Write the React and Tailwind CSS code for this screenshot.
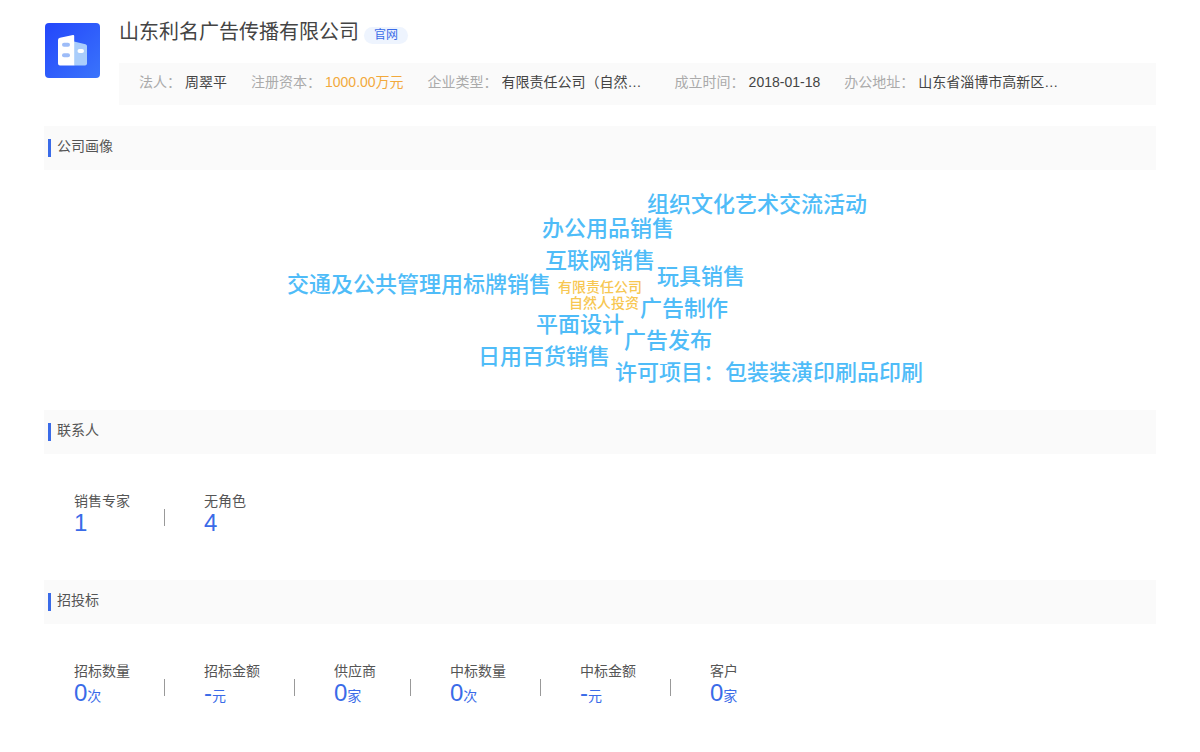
import clsx from 'clsx';

const facts = [
  { label: '法人：', value: '周翠平' },
  { label: '注册资本：', value: '1000.00万元', highlight: true },
  { label: '企业类型：', value: '有限责任公司（自然人）', clip: true },
  { label: '成立时间：', value: '2018-01-18' },
  { label: '办公地址：', value: '山东省淄博市高新区柳泉', clip: true },
];

const words = [
  { text: '组织文化艺术交流活动', place: 'left-[calc(50%+47px)] top-[23px]' },
  { text: '办公用品销售', place: 'left-[calc(50%-58px)] top-[47px]' },
  { text: '互联网销售', place: 'left-[calc(50%-55px)] top-[79px]' },
  { text: '玩具销售', place: 'left-[calc(50%+57px)] top-[95px]' },
  { text: '交通及公共管理用标牌销售', place: 'left-[calc(50%-313px)] top-[103px]' },
  { text: '有限责任公司', place: 'left-[calc(50%-42px)] top-[105px]', small: true },
  { text: '自然人投资', place: 'left-[calc(50%-31px)] top-[121px]', small: true },
  { text: '广告制作', place: 'left-[calc(50%+40px)] top-[127px]' },
  { text: '平面设计', place: 'left-[calc(50%-64px)] top-[143px]' },
  { text: '广告发布', place: 'left-[calc(50%+24px)] top-[159px]' },
  { text: '日用百货销售', place: 'left-[calc(50%-122px)] top-[175px]' },
  { text: '许可项目：包装装潢印刷品印刷', place: 'left-[calc(50%+15px)] top-[191px]' },
];

const contacts = [
  { label: '销售专家', value: '1' },
  { label: '无角色', value: '4' },
];

const bids = [
  { label: '招标数量', value: '0', unit: '次' },
  { label: '招标金额', value: '-', unit: '元' },
  { label: '供应商', value: '0', unit: '家' },
  { label: '中标数量', value: '0', unit: '次' },
  { label: '中标金额', value: '-', unit: '元' },
  { label: '客户', value: '0', unit: '家' },
];

function CompanyLogo() {
  return (
    <svg viewBox="0 0 55 55" className="size-[55px] shrink-0" aria-hidden="true">
      <defs>
        <linearGradient id="logo-bg" x1="0" y1="0" x2="1" y2="1">
          <stop offset="0" stopColor="#2346fb" />
          <stop offset="1" stopColor="#3a74fb" />
        </linearGradient>
      </defs>
      <rect width="55" height="55" rx="4" fill="url(#logo-bg)" />
      <path d="M29 18.5 40.5 21.2Q42 21.6 42 23V40.5Q42 42.5 40 42.5H29Z" fill="#a9cdfb" />
      <path d="M15 14.8 28 12Q29.2 11.8 29.2 13V42.5H15Q13 42.5 13 40.5V17Q13 15.2 15 14.8Z" fill="#fff" />
      <rect x="17" y="19.8" width="8" height="4" rx="2" fill="#9dbcf8" />
      <rect x="17" y="30.2" width="8" height="4" rx="2" fill="#9dbcf8" />
      <rect x="32.5" y="26" width="6.5" height="4" rx="2" fill="#fff" />
    </svg>
  );
}

function Section({ title, children }) {
  return (
    <section>
      <div className="flex h-11 items-center bg-[#fafafa] pl-1">
        <span className="mr-1.5 h-[18px] w-[3px] bg-[#3a6be8]" />
        <h2 className="pb-1 text-sm text-[#555]">{title}</h2>
      </div>
      {children}
    </section>
  );
}

function Stats({ items }) {
  return (
    <div className="flex px-[30px] pt-9 pb-[46px]">
      {items.map((item, i) => (
        <div key={item.label} className="flex items-end">
          {i > 0 && <span className="mr-[39px] mb-2 ml-[34px] h-[17px] w-px bg-[#999]" />}
          <dl>
            <dt className="text-sm leading-[22px] text-[#555]">{item.label}</dt>
            <dd className="flex h-[22px] items-baseline text-2xl leading-[22px] text-[#3a6be8]">
              {item.value}
              {item.unit && <span className="text-sm leading-[22px]">{item.unit}</span>}
            </dd>
          </dl>
        </div>
      ))}
    </div>
  );
}

export default function App() {
  return (
    <main className="min-h-screen bg-white px-11 pt-[19px] font-['Liberation_Sans','Noto_Sans_CJK_SC',sans-serif]">
      <header className="flex gap-[19px] pb-[21px] pl-px">
        <div className="pt-1">
          <CompanyLogo />
        </div>
        <div className="min-w-0 flex-1">
          <div className="flex items-start gap-[5px]">
            <h1 className="text-xl leading-[26px] text-[#444]">山东利名广告传播有限公司</h1>
            <a href="#site" className="mt-2 rounded-full bg-[#eef4fe] px-2.5 text-xs leading-[17px] text-[#3a6be8]">
              官网
            </a>
          </div>
          <dl className="mt-[18px] flex h-[42px] items-center gap-6 bg-[#fafafa] px-5 pb-1 text-sm">
            {facts.map((fact) => (
              <div key={fact.label} className="flex whitespace-nowrap">
                <dt className="text-[#aaa]">{fact.label}</dt>
                <dd
                  className={clsx(
                    'ml-1',
                    fact.highlight ? 'text-[#f2a93c]' : 'text-[#444]',
                    fact.clip && 'w-[149px] truncate',
                  )}
                >
                  {fact.value}
                </dd>
              </div>
            ))}
          </dl>
        </div>
      </header>

      <Section title="公司画像">
        <div className="relative h-60">
          {words.map((word) => (
            <span
              key={word.text}
              className={clsx(
                'absolute whitespace-nowrap font-medium',
                word.place,
                word.small ? 'text-sm leading-6 text-[#f7c752]' : 'text-[22px] leading-6 text-[#4fbcf8]',
              )}
            >
              {word.text}
            </span>
          ))}
        </div>
      </Section>

      <Section title="联系人">
        <Stats items={contacts} />
      </Section>

      <Section title="招投标">
        <Stats items={bids} />
      </Section>
    </main>
  );
}
